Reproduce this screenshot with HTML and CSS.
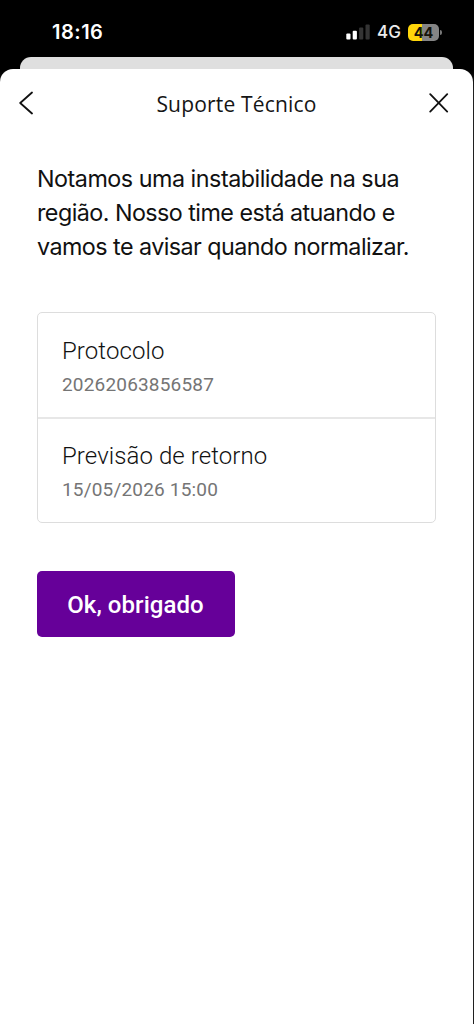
FILE: index.html
```html
<!DOCTYPE html>
<html lang="pt-BR">
<head>
<meta charset="utf-8">
<title>Suporte Técnico</title>
<link rel="stylesheet" href="styles.css">
</head>
<body>
<div class="screen">
  <header class="status">
    <span class="time">18:16</span>
    <div class="indicators">
      <svg class="signal" width="25" height="16" viewBox="0 0 25 16">
        <rect x="0.3" y="9.5" width="4.2" height="6" rx="1" fill="#fff"/>
        <rect x="6.7" y="6.8" width="4.2" height="8.7" rx="1" fill="#fff"/>
        <rect x="13.1" y="3.6" width="4.2" height="11.9" rx="1" fill="#343434"/>
        <rect x="19.5" y="0.4" width="4.2" height="15.1" rx="1" fill="#343434"/>
      </svg>
      <span class="network">4G</span>
      <div class="battery"><span class="level">44</span><i class="cap"></i></div>
    </div>
  </header>
  <div class="back-sheet"></div>
  <main class="sheet">
    <nav class="bar">
      <svg width="16" height="24" viewBox="0 0 16 24" fill="none" stroke="#111" stroke-width="1.8" stroke-linecap="round" stroke-linejoin="round"><path d="M13 1.5 1.2 12 13 22.5"/></svg>
      <h1 class="title">Suporte Técnico</h1>
      <svg width="20" height="20" viewBox="0 0 20 20" fill="none" stroke="#111" stroke-width="1.8" stroke-linecap="round"><path d="M1.2 1.2 18.2 18.6M18.2 1.2 1.2 18.6"/></svg>
    </nav>
    <p class="message">Notamos uma instabilidade na sua<br><span class="tight">região. Nosso time está atuando e<br>vamos te avisar quando normalizar.</span></p>
    <dl class="card">
      <div class="row"><dt>Protocolo</dt><dd>20262063856587</dd></div>
      <div class="row"><dt>Previsão de retorno</dt><dd>15/05/2026 15:00</dd></div>
    </dl>
    <button class="confirm">Ok, obrigado</button>
  </main>
</div>
</body>
</html>
```
FILE: styles.css
```css
* { box-sizing: border-box; }
body { margin: 0; background: #000; }
.screen { width: 474px; height: 1024px; display: flex; flex-direction: column; overflow: hidden; background: linear-gradient(#000 70px, #202020 90px); }
.status { height: 57px; flex: none; background: #000; display: flex; justify-content: space-between; align-items: flex-start; padding: 20px 33px 0 52px; color: #fff; }
.time { font: 600 20px/24px Inter, sans-serif; letter-spacing: 0.5px; }
.indicators { display: flex; align-items: center; height: 24px; }
.signal { margin-right: 6px; }
.network { font: 500 17px/24px Inter, sans-serif; color: #ededed; width: 31px; }
.battery { position: relative; width: 31px; height: 17px; margin-right: 2px; border-radius: 5px; background: linear-gradient(90deg, #ffd60a 14px, #858585 14px); display: flex; justify-content: center; }
.level { font: 700 14.5px/17px Inter, sans-serif; color: #15130a; }
.cap { position: absolute; right: -3px; top: 6px; width: 2px; height: 5px; border-radius: 0 2px 2px 0; background: #777; }
.back-sheet { height: 12px; flex: none; margin: 0 21px 0 20px; border-radius: 11px 11px 0 0; background: #dfdfdf; }
.sheet { flex: 1; width: 473px; background: #fff; border-radius: 13px 13px 0 0; }
.bar { height: 68px; display: flex; justify-content: space-between; align-items: center; padding: 0 24px 0 19px; }
.title { margin: 1px 0 0 9px; font: 400 21px/28px "Open Sans", sans-serif; letter-spacing: 0.18px; color: #151515; }
.message { margin: 25px 37px 0; font: 400 23.3px/34px Inter, sans-serif; letter-spacing: -0.48px; color: #111; white-space: nowrap; }
.tight { letter-spacing: -0.54px; }
.card { margin: 48px 37px 0; border: 1px solid #ddd; border-radius: 5px; }
.row { height: 104px; padding: 23px 24px 0; }
.row + .row { border-top: 2px solid #e7e7e7; height: 105px; padding-top: 22px; }
dt { font: 300 24px/30px Roboto, sans-serif; letter-spacing: 0.08px; color: #111; }
dd { margin: 6px 0 0; font: 400 19px/26px Roboto, sans-serif; letter-spacing: 0.18px; color: #757575; }
.confirm { display: block; margin: 48px 0 0 37px; width: 198px; height: 66px; padding: 1px 1px 0 0; border: 0; border-radius: 5px; background: #660099; color: #fff; font: 500 24px/30px Roboto, sans-serif; letter-spacing: 0.06px; }
```
